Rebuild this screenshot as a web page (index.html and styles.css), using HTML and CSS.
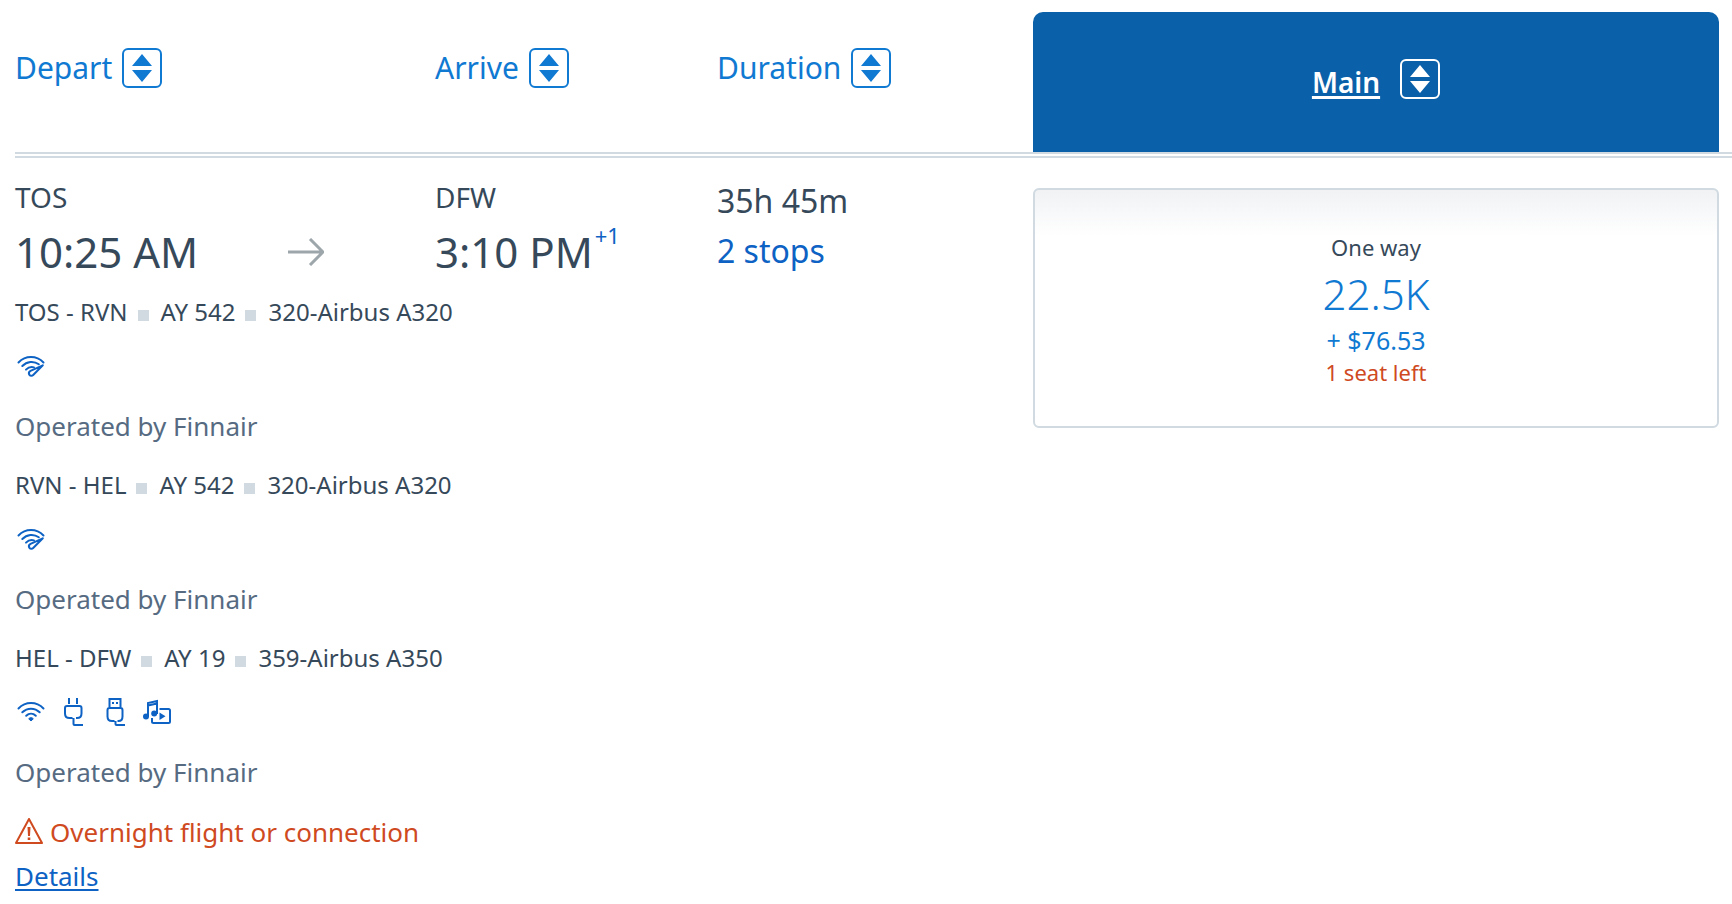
FILE: index.html
```html
<!DOCTYPE html>
<html lang="en">
<head>
<meta charset="utf-8">
<title>Flight results</title>
<link rel="stylesheet" href="styles.css">
</head>
<body>
<svg class="sprite" aria-hidden="true">
  <symbol id="sort" viewBox="0 0 40 40">
    <rect x="1" y="1" width="38" height="38" rx="5" fill="none" stroke="currentColor" stroke-width="2"/>
    <path d="M20 6 30 18H10zM20 34 30 22H10z" fill="currentColor"/>
  </symbol>
  <symbol id="wifi-fast" viewBox="0 0 28 28">
    <g fill="none" stroke="currentColor" stroke-width="2" stroke-linecap="round" stroke-linejoin="round">
      <path d="M1.500 10.500C8.500 3.300 19.500 3.300 26.500 10.500M5.300 14C9.800 9.300 16.800 8.500 21.800 12.300M9 17.600c2.300-2.300 5-3 8-2.200"/>
      <path d="M25.800 13.300 13.500 18.800c-1.500.8-1.900 2.300-1.300 3.700.7 1.500 2.800 1.800 4 .5z"/>
    </g>
  </symbol>
  <symbol id="wifi" viewBox="0 0 28 28">
    <g fill="none" stroke="currentColor" stroke-width="2" stroke-linecap="round">
      <path d="M1.500 10.500C8.500 3.300 19.500 3.300 26.500 10.500M5.300 14.300c5-4.900 12.400-4.900 17.400 0M9.200 17.800c2.800-2.700 6.800-2.700 9.600 0"/>
    </g>
    <path d="m14 23-2.300-2.200c1-1.500 3.600-1.500 4.600 0z" fill="currentColor" stroke="currentColor" stroke-linejoin="round"/>
  </symbol>
  <symbol id="plug" viewBox="0 0 28 28">
    <path d="M10 0v6M18 0v6M13.500 20H10.500C7.500 20 6 18 6 15.500V10Q6 8 8 8H20.500Q22.500 8 22.500 10V15.500C22.500 18 21 20 18 20H17M14.500 20v6q0 1 1 1H24" fill="none" stroke="currentColor" stroke-width="2"/>
  </symbol>
  <symbol id="usb" viewBox="0 0 28 28">
    <path d="M8.500 9V1h11v8M13.500 23H11C8 23 6.500 21 6.500 18.500V12Q6.500 10 8.500 10H19.500Q21.500 10 21.500 12V18.500C21.500 21 20 23 17.500 23H16.500M14.500 23v3q0 1 1 1H24" fill="none" stroke="currentColor" stroke-width="2"/>
    <path d="M11 4h2v2h-2zM15 4h2v2h-2z" fill="currentColor"/>
  </symbol>
  <symbol id="media" viewBox="0 0 28 28">
    <path d="M5 19V5L14 3v13M5 7.500 14 5.500" fill="none" stroke="currentColor" stroke-width="2"/>
    <circle cx="3" cy="18.500" r="3" fill="currentColor"/>
    <circle cx="11.200" cy="15.500" r="3" fill="currentColor"/>
    <path d="M16.500 11H25.500Q27 11 27 12.500V23.500Q27 25 25.500 25H10.500Q9 25 9 23.500V20" fill="none" stroke="currentColor" stroke-width="2"/>
    <path d="m16.500 14.500 6 3.800-6 3.800z" fill="currentColor"/>
  </symbol>
</svg>

<main class="results">
  <header class="head">
    <div class="trip-cols">
      <button class="sort-btn" type="button">Depart <svg class="sort-icon" aria-hidden="true"><use href="#sort"/></svg></button>
      <button class="sort-btn" type="button">Arrive <svg class="sort-icon" aria-hidden="true"><use href="#sort"/></svg></button>
      <button class="sort-btn" type="button">Duration <svg class="sort-icon" aria-hidden="true"><use href="#sort"/></svg></button>
    </div>
    <div class="cabin">
      <a class="cabin-name" href="#main">Main</a>
      <button class="sort-btn cabin-sort" type="button" aria-label="Sort by Main fare"><svg class="sort-icon" aria-hidden="true"><use href="#sort"/></svg></button>
    </div>
  </header>

  <section class="flight">
    <div class="trip">
      <div class="trip-cols">
        <div class="depart">
          <div class="airport">TOS</div>
          <div class="time">10:25 AM
            <svg class="arrow" viewBox="0 0 36 28" aria-hidden="true"><path d="M0 14H35M22 1 35 14 22 27" fill="none" stroke="currentColor" stroke-width="3"/></svg>
          </div>
        </div>
        <div>
          <div class="airport">DFW</div>
          <div class="time arrive-time">3:10 PM<span class="next-day">+1</span></div>
        </div>
        <div class="length">
          <div>35h 45m</div>
          <a class="stops" href="#stops">2 stops</a>
        </div>
      </div>

      <div class="leg"><span>TOS - RVN</span><i class="dot"></i><span>AY 542</span><i class="dot"></i><span>320-Airbus A320</span></div>
      <div class="amenities"><svg class="icon"><use href="#wifi-fast"/></svg></div>
      <div class="operator">Operated by Finnair</div>

      <div class="leg"><span>RVN - HEL</span><i class="dot"></i><span>AY 542</span><i class="dot"></i><span>320-Airbus A320</span></div>
      <div class="amenities"><svg class="icon"><use href="#wifi-fast"/></svg></div>
      <div class="operator">Operated by Finnair</div>

      <div class="leg"><span>HEL - DFW</span><i class="dot"></i><span>AY 19</span><i class="dot"></i><span>359-Airbus A350</span></div>
      <div class="amenities">
        <svg class="icon"><use href="#wifi"/></svg>
        <svg class="icon"><use href="#plug"/></svg>
        <svg class="icon"><use href="#usb"/></svg>
        <svg class="icon"><use href="#media"/></svg>
      </div>
      <div class="operator">Operated by Finnair</div>

      <div class="warning">
        <svg class="warning-icon" viewBox="0 0 28 28" aria-hidden="true"><path d="M14 1 27 25H1z" fill="none" stroke="currentColor" stroke-width="2" stroke-linejoin="round"/><path d="M12.500 9h3l-.5 9h-2zM12.700 19.500h2.600v2.600h-2.600z" fill="currentColor"/></svg>
        Overnight flight or connection
      </div>
      <a class="details" href="#details">Details</a>
    </div>

    <button class="fare" type="button">
      <span class="fare-type">One way</span>
      <span class="fare-miles">22.5K</span>
      <span class="fare-tax">+ $76.53</span>
      <span class="fare-seats">1 seat left</span>
    </button>
  </section>
</main>
</body>
</html>
```
FILE: styles.css
```css
* { box-sizing: border-box; }

body {
  margin: 0;
  background: #fff;
  color: #36495a;
  font-family: "Noto Sans", "Open Sans", sans-serif;
  font-size: 24px;
  white-space: nowrap;
}

button {
  margin: 0;
  padding: 0;
  border: 0;
  background: none;
  font: inherit;
  cursor: pointer;
}

.sprite { display: none; }

.results { padding: 12px 0 0 15px; }

.head,
.flight {
  display: grid;
  grid-template-columns: 1018fr 699fr;
  align-items: start;
}

.head { border-bottom: 6px double #d0dae0; }

.trip-cols {
  display: grid;
  grid-template-columns: 420fr 282fr 316fr;
}

.head .trip-cols { padding-top: 36px; }

.sort-btn {
  display: flex;
  align-items: center;
  gap: 10px;
  color: #1079d2;
  font-size: 30px;
  line-height: 40px;
}

.sort-icon { width: 40px; height: 40px; }

.cabin {
  display: flex;
  align-items: center;
  justify-content: center;
  gap: 20px;
  height: 140px;
  margin-right: 13px;
  padding-bottom: 6px;
  border-radius: 10px 10px 0 0;
  background: #0b61a9;
}

.cabin-name {
  padding-top: 6px;
  color: #fff;
  font-size: 28px;
  font-weight: 600;
  text-decoration-thickness: 3px;
  text-underline-offset: 3px;
}

.cabin-sort { color: #fff; }

.trip { padding-top: 18px; }

.airport {
  font-size: 28px;
  line-height: 42px;
}

.time {
  display: flex;
  align-items: center;
  font-size: 42px;
  line-height: 68px;
}

.depart .time {
  justify-content: space-between;
  padding-right: 111px;
}

.arrow { width: 36px; height: 28px; color: #9da6ab; }

.arrive-time { align-items: flex-start; }

.next-day {
  margin-left: 2px;
  color: #0d62c4;
  font-size: 22px;
  line-height: 34px;
}

.length { font-size: 32px; line-height: 50px; }

.stops {
  color: #0d62c4;
  text-decoration: none;
}

.leg {
  display: flex;
  align-items: center;
  line-height: 52px;
}

.dot {
  width: 11px;
  height: 11px;
  margin: 6px 12px 0 10px;
  background: #d0dae0;
}

.amenities {
  display: flex;
  align-items: center;
  gap: 14px;
  height: 55px;
  padding-left: 2px;
  color: #0d62c4;
}

.icon { width: 28px; height: 28px; }

.operator {
  color: #566b82;
  font-size: 26px;
  line-height: 66px;
}

.warning {
  display: flex;
  align-items: center;
  gap: 7px;
  padding-top: 3px;
  color: #cf4a1f;
  font-size: 26px;
  line-height: 48px;
}

.warning-icon { width: 28px; height: 28px; }

.details {
  color: #0d62c4;
  font-size: 26px;
  line-height: 40px;
  text-decoration-thickness: 2px;
  text-underline-offset: 3px;
}

.fare {
  display: flex;
  flex-direction: column;
  align-items: center;
  margin: 30px 13px 0 0;
  padding: 40px 0 38px;
  border: 2px solid #d0dae0;
  border-radius: 6px;
  background: linear-gradient(#f0f2f4, #fff 46px);
  color: #1079d2;
}

.fare-type {
  color: #36495a;
  font-size: 22px;
  line-height: 34px;
}

.fare-miles {
  font-size: 42px;
  font-weight: 300;
  line-height: 60px;
}

.fare-tax {
  font-size: 25px;
  line-height: 32px;
}

.fare-seats {
  color: #cf4a1f;
  font-size: 22px;
  line-height: 32px;
}
```
